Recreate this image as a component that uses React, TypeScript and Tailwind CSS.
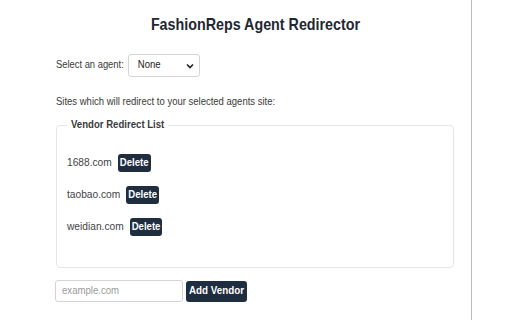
import React from "react";

const font = { fontFamily: '"Liberation Sans", Arial, sans-serif' };

function DeleteBtn() {
  return (
    <button className="h-[18px] px-[2px] rounded-[3px] bg-[#1e2d3f] text-white font-bold text-[9.6px] leading-[18px]">
      <span className="inline-block scale-y-[1.15]">Delete</span>
    </button>
  );
}

export default function App() {
  const vendors = ["1688.com", "taobao.com", "weidian.com"];
  return (
    <div className="w-[512px] h-[320px] bg-white flex overflow-hidden" style={font}>
      <div className="w-[472px] h-[320px] border-r border-[#bcbcbc] flex flex-col">
        <div className="mt-[14px] ml-[40px] h-[20px] leading-[20px] text-center text-[14.3px] font-bold text-[#1f2733]">
          <span className="inline-block scale-y-[1.12]">FashionReps Agent Redirector</span>
        </div>
        <div className="ml-[56px] mt-[20px] flex items-center gap-[4px] h-[23px]">
          <span className="inline-block scale-y-[1.15] text-[9.4px] text-[#3a3a3a]">Select an agent:</span>
          <div className="w-[72px] h-[23px] border border-[#d4d4d4] rounded-[3px] flex items-center justify-between pl-[9px] pr-[5px]">
            <span className="inline-block scale-y-[1.15] text-[9.6px] text-[#222]">None</span>
            <svg width="8" height="6" viewBox="0 0 8 6">
              <path d="M1 1.5 L4 4.5 L7 1.5" fill="none" stroke="#222" strokeWidth="1.6" />
            </svg>
          </div>
        </div>
        <div className="ml-[56px] mt-[19px] h-[12px] leading-[12px] text-[9.5px] text-[#3a3a3a]">
          <span className="inline-block scale-y-[1.15]">Sites which will redirect to your selected agents site:</span>
        </div>
        <fieldset className="ml-[56px] mt-[11px] w-[398px] h-[149px] border border-[#e6e6e6] rounded-[4px] px-[10px] pt-[23px]">
          <legend className="px-[4px] text-[9.6px] leading-[12px] font-bold text-[#3a3a3a]">
            <span className="inline-block scale-y-[1.15]">Vendor Redirect List</span>
          </legend>
          <div className="flex flex-col gap-[14px]">
            {vendors.map((v) => (
              <div key={v} className="flex items-center gap-[6px] h-[18px]">
                <span className="inline-block scale-y-[1.12] text-[10.2px] text-[#444]">{v}</span>
                <DeleteBtn />
              </div>
            ))}
          </div>
        </fieldset>
        <div className="ml-[55px] mt-[12px] flex items-center gap-[3px]">
          <div className="w-[128px] h-[22px] border border-[#d4d4d4] rounded-[3px] flex items-center pl-[6px] text-[9.6px] text-[#9a9a9a]">
            <span className="inline-block scale-y-[1.15]">example.com</span>
          </div>
          <button className="h-[21px] px-[3px] rounded-[3px] bg-[#1e2d3f] text-white font-bold text-[9.8px]">
            <span className="inline-block scale-y-[1.15]">Add Vendor</span>
          </button>
        </div>
      </div>
    </div>
  );
}
